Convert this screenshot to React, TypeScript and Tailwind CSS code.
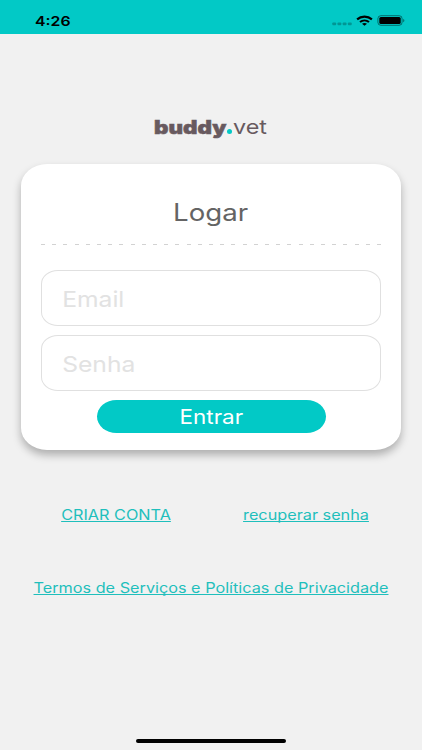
function StatusBar() {
    return (
        <header className="flex h-[34px] items-start justify-between bg-[#02c9c6] pl-[35px] pr-[17px] text-black">
            <span className="mt-[11px] origin-left scale-x-[1.17] text-[13.5px] font-semibold leading-5">
                4:26
            </span>

            <div className="mt-[15px] flex items-center">
                <svg width="20" height="4" viewBox="0 0 20 4" className="mt-[7px]" fill="#000" fillOpacity="0.25">
                    <rect x="0.3" y="0.5" width="3.8" height="2.8" rx="0.8" />
                    <rect x="5.5" y="0.5" width="3.8" height="2.8" rx="0.8" />
                    <rect x="10.7" y="0.5" width="3.8" height="2.8" rx="0.8" />
                    <rect x="15.9" y="0.5" width="3.8" height="2.8" rx="0.8" />
                </svg>
                <svg width="17" height="11" viewBox="0 0 17 11" className="ml-[4px]" fill="none" stroke="#000" strokeWidth="2.1">
                    <path d="M1.1 4.4C5.2 0.7 11.8 0.7 15.9 4.4" />
                    <path d="M4 7C6.6 4.9 10.4 4.9 13 7" />
                    <path d="M6 8.7C7.4 7.6 9.6 7.6 11 8.7L8.5 10.7Z" fill="#000" stroke="none" />
                </svg>
                <svg width="28" height="11" viewBox="0 0 28 11" className="ml-[4px]">
                    <rect x="0.9" y="0.7" width="24.2" height="9.6" rx="3" fill="none" stroke="#000" strokeOpacity="0.45" />
                    <rect x="2.3" y="2" width="21.4" height="7" rx="1.6" fill="#000" />
                    <path d="M26.4 4C27.6 4.4 27.6 6.8 26.4 7.2Z" fill="#000" fillOpacity="0.6" />
                </svg>
            </div>
        </header>
    )
}

function Logo() {
    return (
        <h1 className="flex h-7 items-baseline pl-[154px] leading-7 text-[#685a5f]">
            <span className="w-[73px]">
                <span className="inline-block origin-left scale-x-[1.21] text-[18.5px] font-black [-webkit-text-stroke:0.5px_#685a5f]">
                    buddy
                </span>
            </span>
            <span className="size-[5px] rounded-full bg-[#02c9c6]" />
            <span className="ml-[1px] inline-block origin-left scale-x-[1.17] text-[20px]">
                vet
            </span>
        </h1>
    )
}

function Field({ label, type }: { label: string; type: string }) {
    return (
        <label className="block h-14 overflow-hidden rounded-[17px/14px] border border-[#e0e0e0]">
            <input
                type={type}
                placeholder={label}
                className="h-full w-[240px] origin-left scale-x-[1.12] pl-[18px] pt-px text-[22px] outline-none placeholder:text-[#e2e2e2]"
            />
        </label>
    )
}

function TextLink({ children }: { children: string }) {
    return (
        <a
            href="#"
            className="inline-block scale-x-[1.16] whitespace-nowrap text-[14px] leading-5 text-[#1fbfbc] underline decoration-1 underline-offset-[1px] [text-decoration-skip-ink:none]"
        >
            {children}
        </a>
    )
}

export default function App() {
    return (
        <div className="flex h-[750px] w-[422px] flex-col overflow-hidden bg-[#f1f1f1] font-['Inter',sans-serif]">
            <StatusBar />

            <main className="flex flex-1 flex-col pt-[79px]">
                <Logo />

                <section className="mx-[21px] mt-[23px] h-[286px] rounded-[26px/22px] bg-white px-5 pt-[31px] shadow-[0_5px_8px_rgba(0,0,0,0.28)]">
                    <h2 className="text-center text-[24px] leading-9 text-[#646464]">
                        <span className="inline-block scale-x-[1.15]">Logar</span>
                    </h2>
                    <div className="mt-[13px] h-px bg-[repeating-linear-gradient(90deg,#d2d2d2_0_4px,transparent_4px_11.2px)]" />

                    <form className="mt-[25px] flex flex-col">
                        <Field label="Email" type="email" />
                        <div className="mt-[9px]">
                            <Field label="Senha" type="password" />
                        </div>
                        <button
                            type="button"
                            className="mr-auto ml-[55.5px] mt-[8.5px] h-[33.5px] w-[229px] rounded-[20px/17px] bg-[#02c9c6] pt-px text-[20px] text-white"
                        >
                            <span className="inline-block scale-x-[1.12]">Entrar</span>
                        </button>
                    </form>
                </section>

                <nav className="mx-[21px] mt-[55px] grid grid-cols-2 text-center">
                    <TextLink>CRIAR CONTA</TextLink>
                    <TextLink>recuperar senha</TextLink>
                </nav>
                <div className="mt-[50px] text-center">
                    <TextLink>Termos de Serviços e Políticas de Privacidade</TextLink>
                </div>
            </main>

            <div className="mx-auto mb-[7px] h-1 w-[150px] rounded-full bg-black" />
        </div>
    )
}
